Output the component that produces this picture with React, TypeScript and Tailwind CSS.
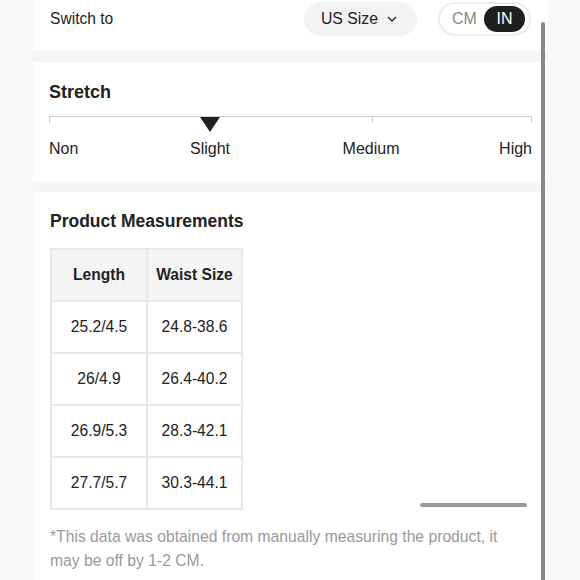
import React from "react";

const rows = [
  ["25.2/4.5", "24.8-38.6"],
  ["26/4.9", "26.4-40.2"],
  ["26.9/5.3", "28.3-42.1"],
  ["27.7/5.7", "30.3-44.1"],
];

export default function App() {
  return (
    <div
      className="relative w-[580px] h-[580px] overflow-hidden bg-[#f8f8f8] text-[#222]"
      style={{ fontFamily: '"Liberation Sans", Arial, sans-serif' }}
    >
      <div className="ml-[33px] w-[515px] bg-white">
        {/* Switch row */}
        <div className="flex h-[51px] items-start justify-between pl-[17px] pr-[17px] pt-[2px]">
          <div className="mt-[7px] text-[15.6px] leading-[20px]">Switch to</div>
          <div className="flex items-center gap-[21px]">
            <div className="flex h-[34px] items-center gap-[9px] rounded-full bg-[#f3f3f3] pl-[17px] pr-[20px] text-[15.8px]">
              <span>US Size</span>
              <svg width="10" height="6" viewBox="0 0 10 6" fill="none">
                <path d="M1 1l4 4 4-4" stroke="#222" strokeWidth="1.3" />
              </svg>
            </div>
            <div className="flex h-[34px] w-[93px] items-center rounded-full border-2 border-[#ececec] bg-white pl-[12px] pr-[4px]">
              <span className="text-[16px] text-[#888]">CM</span>
              <span className="ml-auto flex h-[26px] w-[41px] items-center justify-center rounded-full bg-[#1f1f1f] text-[16px] text-white">
                IN
              </span>
            </div>
          </div>
        </div>

        <div className="h-[11px] bg-[#f5f5f5]" />

        {/* Stretch */}
        <div className="h-[119px] px-[16px] pt-[20px]">
          <div className="text-[18px] font-bold leading-[20px]">Stretch</div>
          <div className="relative mt-[14px] h-[50px] w-[483px]">
            <div className="absolute left-0 right-0 top-0 h-px bg-[#cfcfcf]" />
            <div className="absolute left-0 top-0 h-[7px] w-px bg-[#cfcfcf]" />
            <div className="absolute left-[323px] top-0 h-[7px] w-px bg-[#cfcfcf]" />
            <div className="absolute right-0 top-0 h-[7px] w-px bg-[#cfcfcf]" />
            <svg className="absolute left-[151px] top-[1px]" width="20" height="15" viewBox="0 0 20 15">
              <path d="M0 0h20L10 15z" fill="#222" />
            </svg>
            <span className="absolute left-0 top-[23px] text-[16px] leading-[20px]">Non</span>
            <span className="absolute left-[161px] top-[23px] -translate-x-1/2 text-[16px] leading-[20px]">Slight</span>
            <span className="absolute left-[322px] top-[23px] -translate-x-1/2 text-[16px] leading-[20px]">Medium</span>
            <span className="absolute right-0 top-[23px] text-[16px] leading-[20px]">High</span>
          </div>
        </div>

        <div className="h-[11px] bg-[#f5f5f5]" />

        {/* Product Measurements */}
        <div className="px-[17px] pt-[19px] pb-[20px]">
          <div className="text-[17.5px] font-bold leading-[20px]">Product Measurements</div>
          <table className="mt-[17px] border-collapse text-[15.6px]">
            <thead>
              <tr className="bg-[#f5f5f5]">
                <th className="h-[52px] w-[96px] border-2 border-[#e8e8e8] text-center font-bold">Length</th>
                <th className="h-[52px] w-[95px] border-2 border-[#e8e8e8] text-center font-bold">Waist Size</th>
              </tr>
            </thead>
            <tbody>
              {rows.map((r) => (
                <tr key={r[0]}>
                  <td className="h-[52px] border-2 border-[#e8e8e8] text-center">{r[0]}</td>
                  <td className="h-[52px] border-2 border-[#e8e8e8] text-center">{r[1]}</td>
                </tr>
              ))}
            </tbody>
          </table>
          <p className="mt-[15px] w-[465px] text-[15.7px] leading-[24px] text-[#999]">
            *This data was obtained from manually measuring the product, it may be off by 1-2 CM.
          </p>
        </div>
      </div>

      {/* scrollbars */}
      <div className="absolute left-[420px] top-[503px] h-[4px] w-[107px] rounded-full bg-[#9a9a9a]" />
      <div className="absolute left-[541px] top-[22px] h-[560px] w-[4px] rounded-full bg-[#888]" />
    </div>
  );
}
